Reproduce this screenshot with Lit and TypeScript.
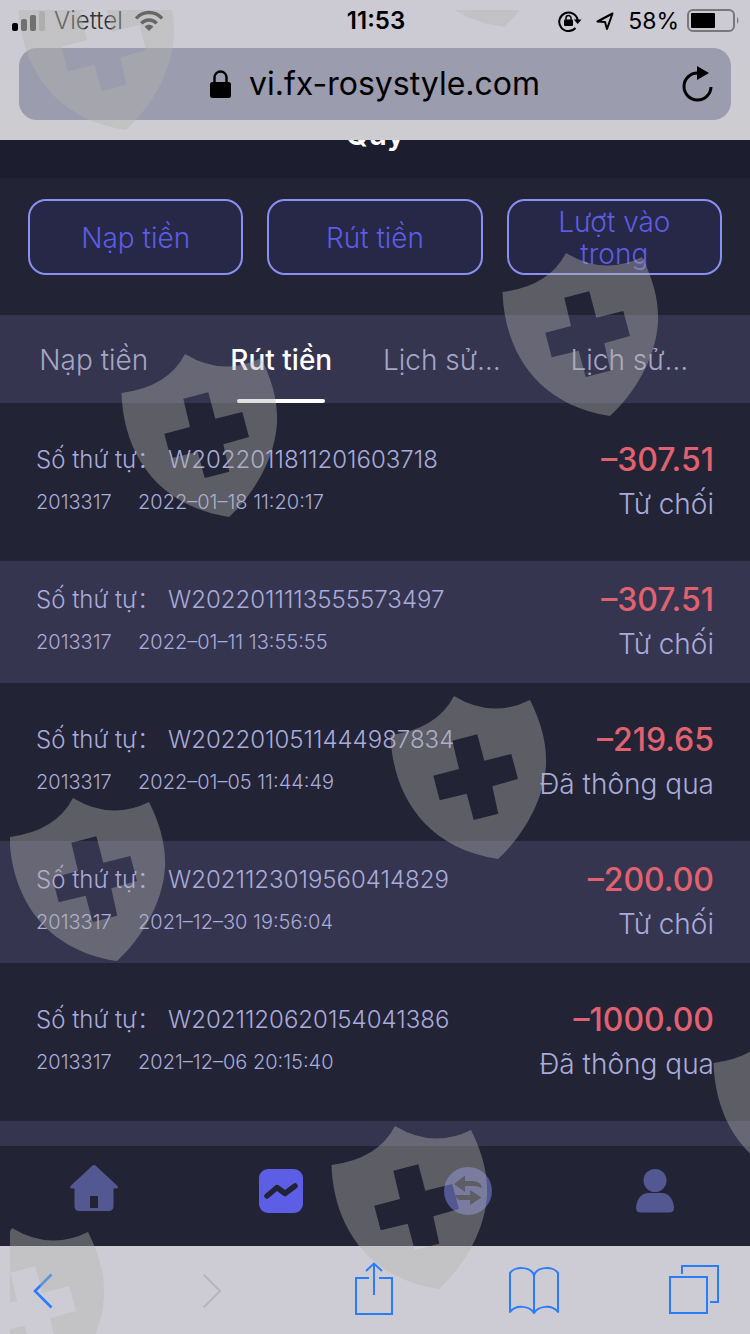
import { LitElement, html, svg, css } from "lit";
import { customElement } from "lit/decorators.js";
import { classMap } from "lit/directives/class-map.js";

interface Entry {
  order: string;
  account: string;
  time: string;
  amount: string;
  status: string;
}

const ENTRIES: Entry[] = [
  { order: "W2022011811201603718", account: "2013317", time: "2022–01–18 11:20:17", amount: "–307.51", status: "Từ chối" },
  { order: "W2022011113555573497", account: "2013317", time: "2022–01–11 13:55:55", amount: "–307.51", status: "Từ chối" },
  { order: "W2022010511444987834", account: "2013317", time: "2022–01–05 11:44:49", amount: "–219.65", status: "Đã thông qua" },
  { order: "W2021123019560414829", account: "2013317", time: "2021–12–30 19:56:04", amount: "–200.00", status: "Từ chối" },
  { order: "W2021120620154041386", account: "2013317", time: "2021–12–06 20:15:40", amount: "–1000.00", status: "Đã thông qua" },
];

const SHIELDS = [
  [18, -33], [396, -136], [502, 253], [121, 354], [390, 696],
  [9, 798], [713, 1024], [331, 1126], [-52, 1228],
];

const SHIELD_PATH =
  "M64 0Q102 23 140 4C151 26 157 47 156 69C154 107 130 143 108 163C30 151 2 92 .5 39Q47 33 64 0Z" +
  "M62.3 44.7L69 73L43.3 79.7L49.7 104.3L76.7 97.7L83.7 124L108.3 117.7L102.3 90.3L128 83L121.3 58L94.3 64.7L87.3 38.3Z";

@customElement("status-bar")
class StatusBar extends LitElement {
  static styles = css`
    :host { display: grid; grid-template-columns: 1fr auto 1fr; align-items: center; height: 40px; box-sizing: border-box; padding: 2px 10px 0 12px; font-size: 24px; line-height: 32px; color: #000; }
    .side { display: flex; align-items: center; gap: 8px; }
    .carrier { color: #333; font-weight: 300; }
    .right { justify-content: flex-end; gap: 14px; }
    .power { display: flex; align-items: center; gap: 8px; font-size: 23px; }
    .clock { font-weight: 600; }
    svg { display: block; flex: none; }
  `;
  render() {
    return html`
      <div class="side">
        <svg width="34" height="20" viewBox="0 0 34 20" aria-hidden="true">
          <rect x="0" y="12" width="6" height="8" rx="2" fill="#000"/>
          <rect x="9" y="8" width="6" height="12" rx="2" fill="#444"/>
          <rect x="18" y="4" width="6" height="16" rx="2" fill="#444"/>
          <rect x="27" y="0" width="6" height="20" rx="2" fill="#aaa"/>
        </svg>
        <span class="carrier">Viettel</span>
        <svg width="32" height="22" viewBox="-2 0 32 22" fill="none" stroke="#333" stroke-width="3.4" aria-hidden="true">
          <path d="M3 8.500C10 .5 22 .5 29 8.500M8.300 13.300C12.500 8.900 19.500 8.900 23.700 13.300"/>
          <path d="M11.700 16.700C14 14.200 18 14.200 20.300 16.700L16 21Z" fill="#333" stroke="none"/>
        </svg>
      </div>
      <span class="clock">11:53</span>
      <div class="side right">
        <svg width="24" height="22" viewBox="0 0 24 22" fill="none" stroke="#000" stroke-width="2" aria-hidden="true">
          <path d="M17.500 18A9.300 9.300 0 1 1 19.700 10"/>
          <path d="M15.800 9.500H23.500L19.700 14Z" fill="#000" stroke="none"/>
          <rect x="6" y="9.500" width="9" height="6.500" rx="1" fill="#000" stroke="none"/>
          <path d="M8 10V8a2.500 2.500 0 0 1 5 0V10" stroke-width="1.500"/>
        </svg>
        <svg width="18" height="19" viewBox="0 0 18 19" fill="none" stroke="#000" stroke-width="2" stroke-linejoin="round" aria-hidden="true">
          <path d="M1.500 9.500L16.500 1.500L11 17L9 10Z"/>
        </svg>
        <div class="power">
          <span>58%</span>
          <svg width="53" height="24" viewBox="0 0 53 24" aria-hidden="true">
            <rect x="1" y="1" width="46" height="21" rx="5" fill="none" stroke="#77777c" stroke-width="2"/>
            <rect x="4" y="4" width="24" height="15" rx="1" fill="#000"/>
            <path d="M50 8Q53 11.500 50 15Z" fill="#77777c"/>
          </svg>
        </div>
      </div>
    `;
  }
}

@customElement("browser-address")
class BrowserAddress extends LitElement {
  static styles = css`
    :host { display: block; padding: 8px 19px 20px; }
    .bar { display: grid; grid-template-columns: 1fr auto 1fr; align-items: center; height: 72px; padding: 0 17px; border-radius: 18px; background: #9b9cae; }
    .site { grid-column: 2; display: flex; align-items: center; gap: 18px; font-size: 32px; line-height: 44px; color: #000; }
    .reload { justify-self: end; display: block; padding: 0; border: 0; background: none; }
    svg { display: block; }
  `;
  render() {
    return html`
      <div class="bar">
        <div class="site">
          <svg width="21" height="28" viewBox="0 0 21 28" aria-hidden="true">
            <rect x="0" y="12" width="21" height="16" rx="2.500"/>
            <path d="M4.500 13V7.500a6 6 0 0 1 12 0V13" fill="none" stroke="#000" stroke-width="2.400"/>
          </svg>
          <span>vi.fx-rosystyle.com</span>
        </div>
        <button class="reload" aria-label="Tải lại">
          <svg width="34" height="38" viewBox="0 0 34 38">
            <path d="M31 22A13.500 13.500 0 1 1 17.500 8H19" fill="none" stroke="#000" stroke-width="3"/>
            <path d="M17 1L29 8L17 15Z"/>
          </svg>
        </button>
      </div>
    `;
  }
}

@customElement("fund-page")
class FundPage extends LitElement {
  static styles = css`
    :host { display: flex; flex-direction: column; background: #222335; overflow: hidden; }
    .title { flex: none; height: 88px; margin: -50px 0 0; background: #1c1d2e; color: #fff; font-size: 30px; line-height: 88px; font-weight: 600; text-align: center; }
    .actions { flex: none; display: grid; grid-template-columns: repeat(3, 1fr); gap: 24px; padding: 21px 28px 40px; }
    .action { height: 76px; padding: 2px 32px 0; border: 2px solid #8a8ff2; border-radius: 18px; background: #272747; color: #5b5de2; font: inherit; font-weight: 300; font-size: 28px; line-height: 32px; }
    .tabs { flex: none; display: grid; grid-template-columns: repeat(4, 1fr); height: 88px; background: #36354f; }
    .tab { position: relative; overflow: hidden; padding: 2px 8px 0; border: 0; background: none; color: #a4a6c6; font: inherit; font-weight: 300; font-size: 28px; line-height: 86px; white-space: nowrap; text-align: center; }
    .cut { text-align: left; }
    .active { color: #fff; font-weight: 500; }
    .active::after { content: ""; position: absolute; left: calc(50% - 44px); bottom: 0; width: 88px; height: 4px; border-radius: 2px; background: #fff; }
    .list { flex: none; display: flex; flex-direction: column; gap: 18px; margin: 0; padding: 18px 0 0; list-style: none; }
    .row { display: flex; justify-content: space-between; min-height: 122px; box-sizing: border-box; padding: 17px 36px 0; color: #a9abdb; }
    .row:nth-child(even) { background: #36354f; }
    .details, .result { display: flex; flex-direction: column; }
    .result { align-items: flex-end; }
    .line { display: flex; font-size: 24px; line-height: 44px; font-weight: 300; }
    .label { width: 132px; white-space: nowrap; }
    .meta { display: flex; font-size: 20px; line-height: 40px; font-weight: 300; }
    .account { width: 102px; }
    .amount { font-size: 32px; line-height: 44px; font-weight: 500; color: #e06270; }
    .status { font-size: 28px; line-height: 44px; font-weight: 300; }
  `;
  render() {
    const tabs = ["Nạp tiền", "Rút tiền", "Lịch sử…", "Lịch sử…"];
    return html`
      <h1 class="title">Quỹ</h1>
      <div class="actions">
        ${["Nạp tiền", "Rút tiền", "Lượt vào trong"].map((t) => html`<button class="action">${t}</button>`)}
      </div>
      <div class="tabs" role="tablist">
        ${tabs.map((t, i) => html`
          <button role="tab" aria-selected=${i === 1 ? "true" : "false"}
            class=${classMap({ tab: true, active: i === 1, cut: i > 1 })}>${t}</button>`)}
      </div>
      <ul class="list">
        ${ENTRIES.map((e) => html`
          <li class="row">
            <div class="details">
              <div class="line"><span class="label">Số thứ tự：</span><span>${e.order}</span></div>
              <div class="meta"><span class="account">${e.account}</span><span>${e.time}</span></div>
            </div>
            <div class="result">
              <span class="amount">${e.amount}</span>
              <span class="status">${e.status}</span>
            </div>
          </li>`)}
        <li class="row" aria-hidden="true"></li>
      </ul>
    `;
  }
}

@customElement("page-nav")
class PageNav extends LitElement {
  static styles = css`
    :host { display: grid; grid-template-columns: repeat(4, 1fr); height: 100px; box-sizing: border-box; padding: 0 2px 10px 0; background: #222335; }
    .item { display: flex; align-items: center; justify-content: center; color: #535893; }
    .current { color: #5c5fe6; }
    svg { display: block; fill: currentColor; }
  `;
  render() {
    return html`
      <a class="item" href="#home" aria-label="Trang chủ">
        <svg width="48" height="54" viewBox="0 0 48 54">
          <path fill-rule="evenodd" d="M22.500 1.600Q24 .4 25.500 1.600L47.500 22Q49 24.500 46 24.500H43.500V42Q43.500 47 38.500 47H9.500Q4.500 47 4.500 42V24.500H2Q-1 24.500 .5 22ZM20 33V44H28V33Q28 32 27 32H21Q20 32 20 33Z"/>
        </svg>
      </a>
      <a class="item current" href="#fund" aria-label="Quỹ">
        <svg width="44" height="44" viewBox="0 0 44 44">
          <rect width="44" height="44" rx="9"/>
          <path d="M8 27L18 18.500L26 24.500L36 17" fill="none" stroke="#222335" stroke-width="5.500" stroke-linecap="round" stroke-linejoin="round"/>
        </svg>
      </a>
      <a class="item" href="#exchange" aria-label="Giao dịch">
        <svg width="48" height="48" viewBox="0 0 48 48">
          <circle cx="24" cy="24" r="24"/>
          <path fill="#222335" d="M10 17L21 8.500V14H29Q37 14.500 38 21Q34 19 29 19H21V25ZM11.500 28H26V23L37.500 30.500L26 38V33H16Q12 32 11.500 28Z"/>
        </svg>
      </a>
      <a class="item" href="#profile" aria-label="Cá nhân">
        <svg width="40" height="44" viewBox="0 0 40 44">
          <circle cx="20" cy="11.500" r="11.500"/>
          <path d="M13 24H27C35 24 39 33 39 39Q39 43.500 34 43.500H6Q1 43.500 1 39C1 33 5 24 13 24Z"/>
        </svg>
      </a>
    `;
  }
}

@customElement("browser-toolbar")
class BrowserToolbar extends LitElement {
  static styles = css`
    :host { display: flex; justify-content: space-between; align-items: center; height: 88px; box-sizing: border-box; padding: 2px 24px 0 4px; background: #cdccd4; }
    .tool { display: flex; align-items: center; justify-content: center; width: 64px; height: 64px; padding: 0; border: 0; background: none; color: #2a7cfb; }
    .back { width: 78px; }
    .forward { width: 60px; }
    .book { width: 56px; }
    .forward { color: #b7b6c0; }
    svg { display: block; fill: none; stroke: currentColor; stroke-width: 2; }
  `;
  render() {
    return html`
      <button class="tool back" aria-label="Quay lại"><svg width="20" height="36" viewBox="0 0 20 36"><path d="M18.500 1.500L2 18L18.500 34.500" stroke-width="2.600"/></svg></button>
      <button class="tool forward" aria-label="Tiến" disabled><svg width="20" height="36" viewBox="0 0 20 36"><path d="M1.500 1.500L18 18L1.500 34.500"/></svg></button>
      <button class="tool" aria-label="Chia sẻ"><svg width="40" height="60" viewBox="0 0 40 60"><path d="M15 17H2V53H38V17H25M20 34V3M12 10L20 2.500L28 10"/></svg></button>
      <button class="tool book" aria-label="Dấu trang"><svg width="52" height="50" viewBox="0 0 52 50" stroke-linejoin="round"><path d="M26 10C24 0 6 0 2 7V46C8 38 22 40 26 47C30 40 44 38 50 46V7C46 0 28 0 26 10V47"/></svg></button>
      <button class="tool" aria-label="Thẻ"><svg width="50" height="54" viewBox="0 0 50 54"><path d="M1 13H38V49H1ZM13 10V2H49V38H41"/></svg></button>
    `;
  }
}

@customElement("app-root")
class AppRoot extends LitElement {
  static styles = css`
    :host { display: flex; flex-direction: column; position: relative; height: 100vh; overflow: hidden; background: #222335; font-family: Inter, "Noto Sans", "Noto Sans CJK SC", sans-serif; }
    .browser { flex: none; background: linear-gradient(#cccbd5, #cdccd0); }
    fund-page { flex: 1; min-height: 0; }
    page-nav, browser-toolbar { flex: none; }
    .watermark { position: absolute; inset: 10px 0 0 10px; overflow: hidden; pointer-events: none; }
    .shields { display: block; width: 100%; fill: #b3b4ae; fill-opacity: 0.4; fill-rule: evenodd; }
  `;
  render() {
    return html`
      <header class="browser">
        <status-bar></status-bar>
        <browser-address></browser-address>
      </header>
      <fund-page></fund-page>
      <page-nav></page-nav>
      <browser-toolbar></browser-toolbar>
      <div class="watermark" aria-hidden="true">
        <svg class="shields" viewBox="10 10 740 1324">
          ${SHIELDS.map(([x, y]) => svg`<path transform="translate(${x} ${y})" d=${SHIELD_PATH}/>`)}
        </svg>
      </div>
    `;
  }
}
